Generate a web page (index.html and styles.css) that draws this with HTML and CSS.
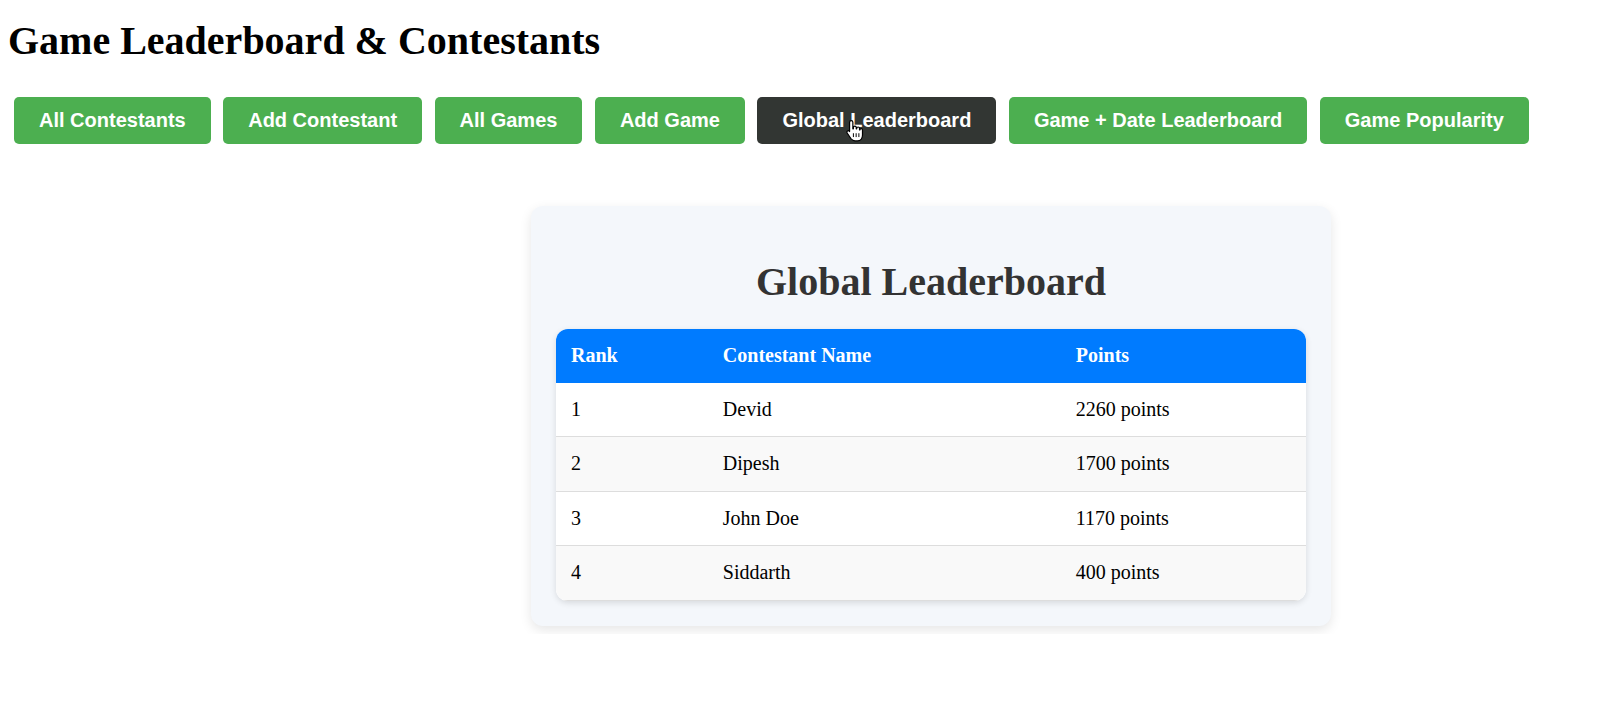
FILE: index.html
```html
<!DOCTYPE html>
<html lang="en">
<head>
<meta charset="utf-8">
<title>Game Leaderboard &amp; Contestants</title>
<link rel="stylesheet" href="styles.css">
</head>
<body>
<h1 class="page-title">Game Leaderboard &amp; Contestants</h1>
<nav class="nav">
  <button class="nav-btn">All Contestants</button>
  <button class="nav-btn">Add Contestant</button>
  <button class="nav-btn">All Games</button>
  <button class="nav-btn">Add Game</button>
  <button class="nav-btn nav-btn-active">Global Leaderboard
    <svg class="cursor" width="19" height="23" viewBox="0 0 17 21" aria-hidden="true">
      <path d="M5.5 1.5c.8 0 1.5.7 1.5 1.5v6h.5V7.8c0-.8.6-1.3 1.3-1.3s1.3.6 1.3 1.3V9h.4V8.6c0-.8.6-1.300 1.3-1.3s1.3.6 1.3 1.3V10h.3c0-.7.6-1.2 1.2-1.2.7 0 1.2.6 1.2 1.3v4.6c0 2.6-1.6 5.3-4.7 5.3H9c-1.8 0-2.8-.8-3.8-2.2L1.8 12.8c-.5-.7-.3-1.5.3-1.9.6-.4 1.4-.2 1.8.4L4 11.5V3c0-.8.7-1.5 1.5-1.5z" fill="#fff" stroke="#000" stroke-width="1.1" stroke-linejoin="round"/>
      <path d="M7.5 13v3.5M10 13v3.5M12.5 13v3.5" stroke="#000" stroke-width="0.9"/>
    </svg>
  </button>
  <button class="nav-btn">Game + Date Leaderboard</button>
  <button class="nav-btn">Game Popularity</button>
</nav>
<main class="main">
  <section class="card">
    <h2 class="card-title">Global Leaderboard</h2>
    <div class="table-wrap">
      <table class="board">
        <thead>
          <tr><th>Rank</th><th>Contestant Name</th><th>Points</th></tr>
        </thead>
        <tbody>
          <tr><td>1</td><td>Devid</td><td>2260 points</td></tr>
          <tr><td>2</td><td>Dipesh</td><td>1700 points</td></tr>
          <tr><td>3</td><td>John Doe</td><td>1170 points</td></tr>
          <tr><td>4</td><td>Siddarth</td><td>400 points</td></tr>
        </tbody>
      </table>
    </div>
  </section>
</main>
</body>
</html>
```
FILE: styles.css
```css
html, body {
  background: #ffffff;
}
body {
  margin: 0;
  padding: 8px;
  font-family: "Liberation Serif", "Times New Roman", serif;
  color: #000;
}
.page-title {
  font-size: 40px;
  font-weight: bold;
  margin: 10px 0 0 0;
  line-height: 46px;
}
.nav {
  display: flex;
  gap: 12.5px;
  padding: 0 6px;
  margin-top: 33px;
}
.nav-btn {
  position: relative;
  font-family: "Liberation Sans", Arial, sans-serif;
  font-size: 20px;
  font-weight: bold;
  line-height: 23px;
  color: #fff;
  background: #4caf50;
  border: 0;
  border-radius: 5px;
  padding: 12px 25px;
  cursor: pointer;
}
.nav-btn-active {
  background: #323633;
}
.cursor {
  position: absolute;
  left: 88px;
  top: 22px;
}
.main {
  padding-left: 523px;
}
.card {
  box-sizing: border-box;
  width: 800px;
  margin-top: 62px;
  padding: 25px;
  background: #f4f7fb;
  border-radius: 12px;
  box-shadow: 0 4px 12px rgba(0, 0, 0, 0.1);
}
.card-title {
  font-size: 40px;
  font-weight: bold;
  color: #333;
  text-align: center;
  line-height: 46px;
  margin: 28px 0 24px;
}
.table-wrap {
  border-radius: 12px;
  overflow: hidden;
  box-shadow: 0 2px 6px rgba(0, 0, 0, 0.12);
}
.board {
  width: 100%;
  border-collapse: collapse;
  font-size: 20px;
  background: #fff;
}
.board th,
.board td {
  text-align: left;
  padding: 15px;
  line-height: 23.5px;
}
.board th {
  background: #007bff;
  color: #fff;
  font-weight: bold;
}
.board td {
  border-bottom: 1px solid #ddd;
}
.board tbody tr:nth-child(even) {
  background: #f9f9f9;
}
```
